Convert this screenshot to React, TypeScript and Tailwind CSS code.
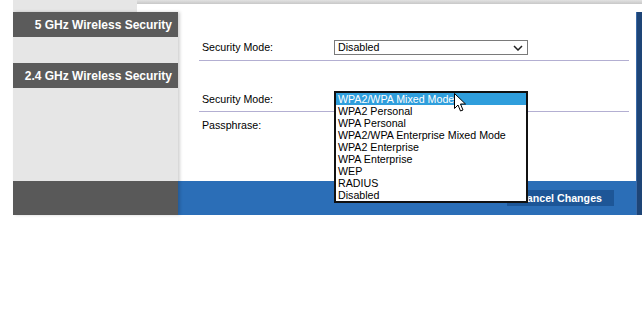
import React from "react";

const modes = [
  "WPA2/WPA Mixed Mode",
  "WPA2 Personal",
  "WPA Personal",
  "WPA2/WPA Enterprise Mixed Mode",
  "WPA2 Enterprise",
  "WPA Enterprise",
  "WEP",
  "RADIUS",
  "Disabled",
];

const SideLabel: React.FC<{ text: string }> = ({ text }) => (
  <div className="h-[25px] bg-[#5b5b5b] flex items-center justify-end pr-[6px] text-white font-bold text-[12px] leading-none">
    {text}
  </div>
);

const Cursor: React.FC = () => (
  <svg width="13" height="20" viewBox="0 0 13 20" className="absolute left-[120px] top-[1px] z-20">
    <path
      d="M0.5 0.5 L0.5 15.5 L4 12 L6.5 18 L9 17 L6.5 11 L11.5 11 Z"
      fill="#fff"
      stroke="#000"
      strokeWidth="1"
      strokeLinejoin="miter"
    />
  </svg>
);

const App: React.FC = () => {
  return (
    <div className="w-[642px] h-[325px] bg-white font-['Liberation_Sans',Arial,sans-serif] text-black">
      <div className="ml-[13px] w-[629px] h-[215px] bg-[#e6e6e6] flex flex-col">
        {/* top edge */}
        <div className="h-[12px] flex">
          <div className="w-[124px]" />
          <div className="flex-1 flex flex-col">
            <div className="h-[4px] bg-gradient-to-b from-[#e2e2e2] to-[#c8c8c8]" />
            <div className="flex-1 bg-white" />
          </div>
        </div>

        <div className="flex-1 flex">
          {/* sidebar */}
          <div className="w-[165px] flex flex-col relative z-10 shadow-[2px_0_3px_rgba(0,0,0,0.18)]">
            <SideLabel text="5 GHz Wireless Security" />
            <div className="h-[26px]" />
            <SideLabel text="2.4 GHz Wireless Security" />
            <div className="flex-1" />
            <div className="h-[34px] bg-[#595959]" />
          </div>

          {/* main panel */}
          <div className="w-[458px] flex flex-col">
            <div className="flex-1 bg-white flex flex-col pt-[28px] text-[10.67px] leading-none">
              <div className="h-[15px] flex items-center">
                <div className="w-[156px] pl-[24px]">Security Mode:</div>
                <div className="w-[194px] h-[15px] border border-[#7a7a7a] bg-white flex items-center justify-between pl-[3px] pr-[4px]">
                  <span>Disabled</span>
                  <svg width="10" height="6" viewBox="0 0 10 6">
                    <path d="M1 1 L5 5 L9 1" fill="none" stroke="#222" strokeWidth="1.5" />
                  </svg>
                </div>
              </div>
              <div className="mt-[5px] ml-[21px] w-[430px] h-px bg-[#b3afd2]" />

              <div className="mt-[31px] h-[15px] flex items-center">
                <div className="w-[156px] pl-[24px]">Security Mode:</div>
                <div className="w-[194px] h-[15px] relative">
                  <div className="absolute left-0 top-[-1px] w-[194px] border-2 border-[#111] bg-white z-10">
                    {modes.map((m, i) => (
                      <div
                        key={m}
                        className={`h-[12px] flex items-center pl-[2px] leading-none whitespace-nowrap ${
                          i === 0 ? "bg-[#2f9edc] text-white" : "text-black"
                        }`}
                      >
                        {m}
                      </div>
                    ))}
                  </div>
                  <Cursor />
                </div>
              </div>
              <div className="mt-[4px] ml-[21px] w-[430px] h-px bg-[#b3afd2]" />

              <div className="mt-[6px] h-[15px] flex items-center">
                <div className="pl-[24px]">Passphrase:</div>
              </div>
            </div>

            {/* bottom bar */}
            <div className="h-[34px] bg-[#2b6eb7] flex justify-end items-start pt-[9px] pr-[22px]">
              <button className="h-[16px] px-[12px] bg-[#1d5697] text-white font-bold text-[10.67px] leading-none">
                Cancel Changes
              </button>
            </div>
          </div>

          {/* right edge */}
          <div className="w-[6px] bg-[#1e4577] border-l border-[#3a6aa8]" />
        </div>
      </div>
    </div>
  );
};

export default App;
